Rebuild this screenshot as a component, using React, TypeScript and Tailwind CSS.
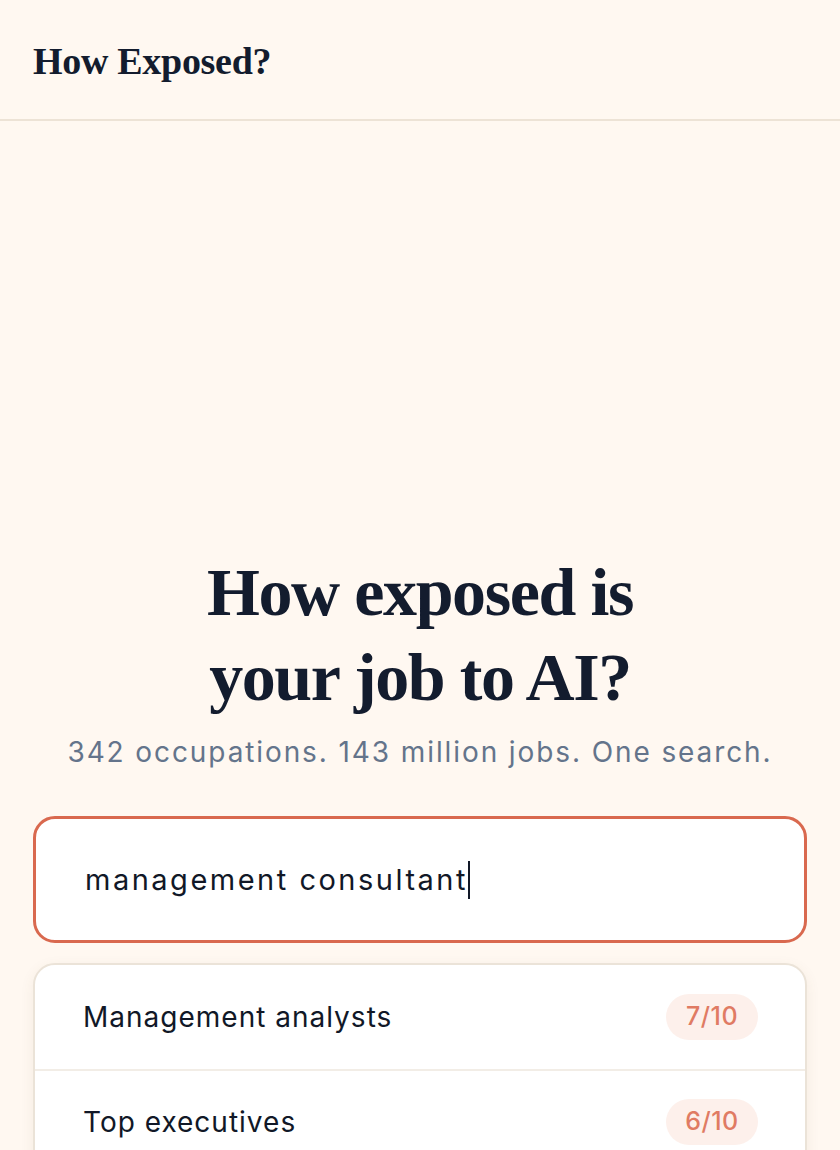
const results = [
  { title: "Management analysts", score: 7 },
  { title: "Top executives", score: 6 },
];

export default function App() {
  return (
    <div className="min-h-screen bg-[#fff8f1] font-['Inter','Noto_Sans',sans-serif] text-[#111827]">
      {/* header */}
      <header className="flex h-[121px] items-center border-b-2 border-[#ede3d6] px-[33px] pt-[4px]">
        <span className="font-['Liberation_Serif',serif] text-[38px] font-bold tracking-[-0.3px] text-[#131c2e]">
          How Exposed?
        </span>
      </header>

      <main className="px-[33px] pt-[429px]">
        <h1 className="text-center font-['Liberation_Serif',serif] text-[68px] font-bold leading-[85px] tracking-[-1.4px] text-[#131c2e]">
          How exposed is
          <br />
          your job to AI?
        </h1>
        <p className="mt-[14px] text-center text-[28px] leading-[36px] tracking-[1.9px] text-[#64748b]">
          342 occupations. 143 million jobs. One search.
        </p>

        <div className="mt-[46px] flex h-[127px] items-center rounded-[22px] border-[3px] border-[#d9694f] bg-white pl-[49px]">
          <span className="text-[29px] tracking-[2.5px] text-[#111827]">management consultant</span>
          <span className="h-[38px] w-[2px] bg-[#111827]" />
        </div>

        <div className="mt-[20px] overflow-hidden rounded-[22px] border-2 border-[#ebe3d8] bg-white shadow-[0_4px_14px_rgba(120,90,50,0.08)]">
          {results.map((r, i) => (
            <div
              key={r.title}
              className={`flex h-[104px] items-center justify-between pl-[48px] pr-[47px] ${
                i > 0 ? "border-t-2 border-[#f2ede6]" : ""
              }`}
            >
              <span className="text-[28px] tracking-[1px] text-[#111827]">{r.title}</span>
              <span className="flex h-[46px] w-[92px] items-center justify-center rounded-full bg-[#fdf0eb] text-[25px] font-medium tracking-[0.5px] text-[#e07b63]">
                {r.score}/10
              </span>
            </div>
          ))}
        </div>
      </main>
    </div>
  );
}
